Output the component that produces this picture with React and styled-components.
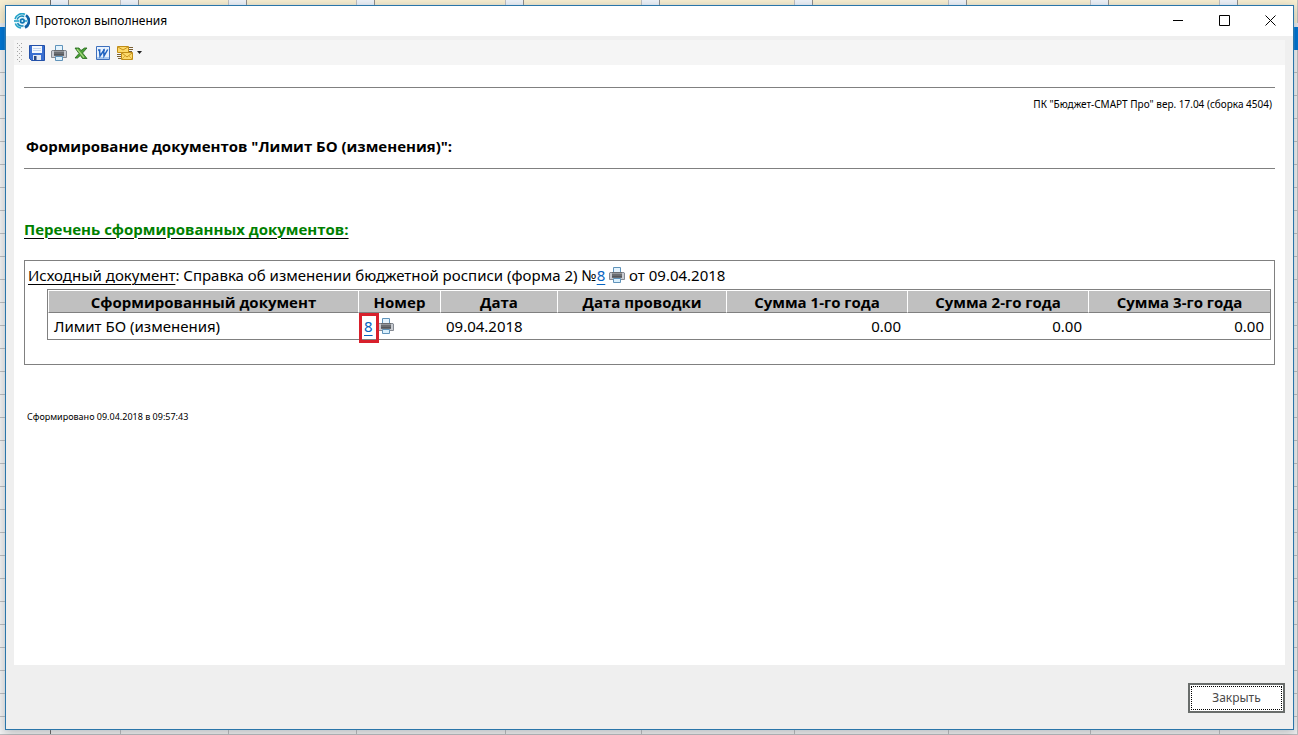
import React from "react";
import styled, { createGlobalStyle } from "styled-components";

const GlobalStyle = createGlobalStyle`
  *, *::before, *::after { box-sizing: border-box; }
  body {
    margin: 0;
    font-family: "Noto Sans", "Open Sans", sans-serif;
    color: #000;
    background: #f0f0f0;
  }
`;

/* ---------- spreadsheet behind the dialog ---------- */

const Desktop = styled.div`
  display: grid;
  grid-template: 1fr / minmax(0, 1fr);
  min-height: 100vh;
  overflow: hidden;
`;

const Sheet = styled.div`
  grid-area: 1 / 1;
  display: flex;
  flex-direction: column;
`;

const SheetRow = styled.div`
  display: grid;
  grid-template-columns: 51px 70px 108px 128px 149px 136px 153px 154px 142px 129px 1fr;
  flex: ${(p) => (p.$fill ? "1 0 0" : "none")};
  height: ${(p) => (p.$fill ? "auto" : "23px")};
  background: ${(p) => (p.$selected ? "#0078d7" : "#f4f5f6")};
  border-bottom: 1px solid ${(p) => (p.$selected ? "#0078d7" : "#bfc1c4")};
`;

const SheetHead = styled(SheetRow)`
  height: 27px;
  background: #f8efd2;
  border-bottom: 4px solid #e8edf2;
`;

const SheetCell = styled.div`
  border-right: 1px solid ${(p) => (p.$strong ? "#6e6e6e" : "#bfc1c4")};
`;

const HeadCell = styled(SheetCell)`
  &:not(:first-child)::before {
    content: "";
    display: block;
    width: 18px;
    height: 100%;
    background: #eef3fa;
    border-right: 1px solid #8f8f8f;
  }
`;

/* ---------- window ---------- */

const Window = styled.main`
  grid-area: 1 / 1;
  z-index: 1;
  display: flex;
  flex-direction: column;
  margin: 5px 4px 5px 5px;
  border: 1px solid #2a75a9;
  background: #efefef;
  box-shadow: 0 0 1px 0 rgba(170, 215, 245, 0.7), 0 3px 10px 1px rgba(0, 0, 0, 0.22);
`;

const TitleBar = styled.header`
  display: flex;
  align-items: center;
  height: 30px;
  padding-left: 8px;
  background: #fff;
`;

const Title = styled.h1`
  flex: 1;
  margin: 0 0 0 5px;
  font-size: 12px;
  line-height: 16px;
  font-weight: 400;
`;

const CaptionButton = styled.button`
  display: flex;
  align-items: center;
  justify-content: center;
  width: 46px;
  height: 28px;
  align-self: flex-start;
  padding: 0;
  border: 0;
  background: transparent;
`;

const Toolbar = styled.div`
  display: flex;
  align-items: center;
  height: 25px;
  margin: 4px 8px 0;
  padding-left: 3px;
  background: #f5f5f5;
`;

const Grip = styled.svg`
  margin-right: 4px;
`;

const ToolButton = styled.button`
  display: flex;
  align-items: center;
  justify-content: center;
  gap: 4px;
  height: 22px;
  padding: 0 3px;
  border: 0;
  background: transparent;
`;

/* ---------- report ---------- */

const Report = styled.section`
  flex: 1;
  margin: 0 8px;
  padding: 22px 10px 0;
  background: #fff;
`;

const Rule = styled.hr`
  height: 1px;
  margin: 0;
  border: 0;
  background: #808080;
`;

const Version = styled.p`
  margin: 9px 3px 0 0;
  font-size: 10px;
  line-height: 14px;
  text-align: right;
`;

const Heading = styled.h2`
  margin: 24px 0 11px 2px;
  font: 700 15px/22px "Open Sans", "Noto Sans", sans-serif;
`;

const ListHeading = styled.h3`
  margin: 49px 0 20px;
  font: 700 15px/22px "Open Sans", "Noto Sans", sans-serif;
  color: #008000;
  text-decoration: underline #000 1px;
  text-underline-offset: 3px;
`;

const SourceBox = styled.div`
  padding: 3px 3px 24px;
  border: 1px solid #808080;
  font-size: 15px;
  line-height: 22px;
`;

const SourceLine = styled.p`
  margin: 0 0 3px;
`;

const Underlined = styled.span`
  text-decoration: underline 1px;
  text-underline-offset: 3px;
`;

const DocLink = styled.a`
  color: #0563c1;
  text-decoration: underline 1px;
  text-underline-offset: 3px;
`;

const Table = styled.table`
  width: calc(100% - 19px);
  margin-left: 19px;
  table-layout: fixed;
  border: 1px solid #808080;
  border-collapse: separate;
  border-spacing: 0;
`;

const HeadTh = styled.th`
  height: 23px;
  padding: 1px 0 0;
  border-top: 1px solid #fff;
  border-left: 1px solid #fff;
  border-bottom: 1px solid #808080;
  background: #c0c0c0;
  font: 700 15px/20px "Open Sans", "Noto Sans", sans-serif;
`;

const Td = styled.td`
  height: 26px;
  padding: 0 6px;
  line-height: 22px;
  text-align: ${(p) => (p.$num ? "right" : "left")};
  white-space: nowrap;
`;

const Marked = styled.span`
  position: relative;
  margin-right: 5px;

  &::after {
    content: "";
    position: absolute;
    inset: -3px -6px -7px -5px;
    border: 3px solid #d8202c;
    pointer-events: none;
  }
`;

const Created = styled.p`
  margin: 45px 0 0 3px;
  font-size: 9px;
  line-height: 14px;
`;

const Footer = styled.footer`
  display: flex;
  justify-content: flex-end;
  padding: 18px 8px 16px;
`;

const CloseButton = styled.button`
  width: 97px;
  height: 30px;
  padding: 1px;
  border: 2px solid #696d6b;
  background: #fff;
  color: #4a4a4a;
  font: 400 12px/22px "Noto Sans", sans-serif;
`;

const FocusFrame = styled.span`
  display: block;
  border: 1px dotted #000;
`;

/* ---------- icons ---------- */

const PrinterSvg = styled.svg`
  vertical-align: -2px;
`;

const PrinterIcon = () => (
  <PrinterSvg width="16" height="16" viewBox="0 0 16 16" aria-hidden="true">
    <path d="M1 5.500h14l.5.5v6.500H.5V6z" fill="#c9ccd2" stroke="#858a92" />
    <path d="M4.500.5h7v5h-7z" fill="#e4f3fd" stroke="#5f93ba" />
    <path d="M3 5h10v6H3z" fill="#6a6d71" />
    <path d="M3 6.500h10" stroke="#94979b" />
    <path d="M3 9.500h10" stroke="#54575b" />
    <path d="M4.500 11.500h7v4h-7z" fill="#d9effc" stroke="#5f93ba" />
  </PrinterSvg>
);

const AppIcon = () => (
  <svg width="16" height="16" viewBox="0 0 16 16" aria-hidden="true">
    <circle cx="8" cy="8" r="7.500" fill="#e5f5fb" />
    <path d="M1 6A7.300 7.300 0 0 1 11 1.300M1.300 10.500A7.300 7.300 0 0 0 7 15" fill="none" stroke="#23a3c8" strokeWidth="1.600" />
    <path d="M12 2.200a7.200 7.200 0 0 1-1 12.300" fill="none" stroke="#0d5fa5" strokeWidth="2.600" />
    <path d="M3.200 6.500a5 5 0 0 1 7-3M3.500 10.200a5 5 0 0 0 6 2.500" fill="none" stroke="#1689b9" strokeWidth="1.500" />
    <circle cx="8.300" cy="8" r="2.700" fill="#0e75b4" />
    <circle cx="8.300" cy="8" r="1" fill="#d5f1fa" />
    <path d="M0 8h5M11 8h2" stroke="#1da0c8" strokeWidth="1.400" />
  </svg>
);

const SaveIcon = () => (
  <svg width="16" height="16" viewBox="0 0 16 16" aria-hidden="true">
    <path d="M.5.5h15v15h-13l-2-2z" fill="#3a6fd0" stroke="#2350a8" />
    <path d="M3 1h10v7H3z" fill="#f4f8fd" />
    <path d="M4 3.500h8M4 5.500h8" stroke="#c3d5ee" />
    <path d="M4 10h8v5H4z" fill="#e3e9f2" />
    <path d="M5 11h2.500v4H5z" fill="#27457f" />
  </svg>
);

const ExcelIcon = () => (
  <svg width="16" height="16" viewBox="0 0 16 16" aria-hidden="true">
    <path d="M2 3h4l2 2.500L11.500 3H14L9.500 8l4.500 5.500H9.500L7.300 10.500 4.500 13H2l4-4.500z" fill="#4aa135" stroke="#23661d" strokeWidth=".8" />
    <path d="M4 4l7 8.500" stroke="#a5d67e" strokeWidth="1.200" />
  </svg>
);

const WordIcon = () => (
  <svg width="16" height="16" viewBox="0 0 16 16" aria-hidden="true">
    <path d="M1.500 1.500h13v13h-13z" fill="#e9f2fd" stroke="#3e70bd" />
    <path d="M2 12h12v2H2z" fill="#a9c8ee" />
    <path d="M3 5h2.500M8 5h2M4.500 5l.5 6 3.700-5.500.3 5.500 3.700-6.500" fill="none" stroke="#1e62c0" strokeWidth="1.500" />
  </svg>
);

const MailIcon = () => (
  <svg width="16" height="16" viewBox="0 0 16 16" aria-hidden="true">
    <path d="M12 2.500h4M12 4.500h4M12 6.500h3M0 9.500h4M0 11.500h4M1 13.500h3" stroke="#7a6034" />
    <path d="M.5 1.500h11v6H.5z" fill="#fdd96a" stroke="#c08d18" />
    <path d="M1 2l5 3 5-3" fill="none" stroke="#c6921e" />
    <path d="M4.500 7.500h11v7h-11z" fill="#fdd96a" stroke="#c08d18" />
    <path d="M5 8l5 4 5-4" fill="none" stroke="#c6921e" />
    <path d="M5 14l3-3M15 14l-3-3" fill="none" stroke="#e0ae3c" />
  </svg>
);

const Caret = () => (
  <svg width="5" height="3" viewBox="0 0 5 3" aria-hidden="true">
    <path d="M0 0h5L2.500 3z" fill="#222" />
  </svg>
);

const CaptionGlyph = ({ d }) => (
  <svg width="11" height="11" viewBox="0 0 11 11" aria-hidden="true">
    <path d={d} fill="none" stroke="#000" />
  </svg>
);

const GripDots = () => (
  <Grip width="5" height="19" viewBox="0 0 5 19" aria-hidden="true">
    {[0, 2, 4, 6, 8, 10, 12, 14, 16, 18].map((y) => (
      <path key={y} d={y % 4 ? `M2 ${y + 0.5}h1` : `M0 ${y + 0.5}h1M4 ${y + 0.5}h1`} stroke="#a5a5a5" />
    ))}
  </Grip>
);

/* ---------- data ---------- */

const COLUMNS = [
  { title: "Сформированный документ", width: 310 },
  { title: "Номер", width: 82 },
  { title: "Дата", width: 117 },
  { title: "Дата проводки", width: 169 },
  { title: "Сумма 1-го года", width: 181 },
  { title: "Сумма 2-го года", width: 181 },
  { title: "Сумма 3-го года", width: 182 },
];

const Col = styled.col`
  width: ${(p) => p.$width}px;
`;

const TOOLS = [
  { label: "Сохранить", Icon: SaveIcon },
  { label: "Печать", Icon: PrinterIcon },
  { label: "Excel", Icon: ExcelIcon },
  { label: "Word", Icon: WordIcon },
];

const CELLS = Array.from({ length: 11 }, (_, i) => i);
const ROWS = Array.from({ length: 29 }, (_, i) => i);

const Background = () => (
  <Sheet aria-hidden="true">
    <SheetHead>
      {CELLS.map((c) => <HeadCell key={c} $strong={c === 0} />)}
    </SheetHead>
    <SheetRow $selected />
    {ROWS.map((r) => (
      <SheetRow key={r}>
        {CELLS.map((c) => <SheetCell key={c} $strong={c === 0} />)}
      </SheetRow>
    ))}
    <SheetRow $fill>
      {CELLS.map((c) => <SheetCell key={c} $strong={c === 0} />)}
    </SheetRow>
  </Sheet>
);

export default function App() {
  return (
    <Desktop>
      <GlobalStyle />
      <Background />
      <Window>
        <TitleBar>
          <AppIcon />
          <Title>Протокол выполнения</Title>
          <CaptionButton aria-label="Свернуть"><CaptionGlyph d="M0 5.500h10" /></CaptionButton>
          <CaptionButton aria-label="Развернуть"><CaptionGlyph d="M.5.5h10v10h-10z" /></CaptionButton>
          <CaptionButton aria-label="Закрыть окно"><CaptionGlyph d="M.5.5l10 10M10.500.5l-10 10" /></CaptionButton>
        </TitleBar>

        <Toolbar role="toolbar" aria-label="Экспорт">
          <GripDots />
          {TOOLS.map(({ label, Icon }) => (
            <ToolButton key={label} aria-label={label}><Icon /></ToolButton>
          ))}
          <ToolButton aria-label="Отправить"><MailIcon /><Caret /></ToolButton>
        </Toolbar>

        <Report>
          <Rule />
          <Version>ПК "Бюджет-СМАРТ Про" вер. 17.04 (сборка 4504)</Version>
          <Heading>Формирование документов "Лимит БО (изменения)":</Heading>
          <Rule />
          <ListHeading>Перечень сформированных документов:</ListHeading>
          <SourceBox>
            <SourceLine>
              <Underlined>Исходный документ</Underlined>: Справка об изменении бюджетной росписи (форма 2) №
              <DocLink href="#source">8</DocLink> <PrinterIcon /> от 09.04.2018
            </SourceLine>
            <Table>
              <colgroup>
                {COLUMNS.map((c) => <Col key={c.title} $width={c.width} />)}
              </colgroup>
              <thead>
                <tr>{COLUMNS.map((c) => <HeadTh key={c.title} scope="col">{c.title}</HeadTh>)}</tr>
              </thead>
              <tbody>
                <tr>
                  <Td>Лимит БО (изменения)</Td>
                  <Td><Marked><DocLink href="#result">8</DocLink></Marked><PrinterIcon /></Td>
                  <Td>09.04.2018</Td>
                  <Td />
                  <Td $num>0.00</Td>
                  <Td $num>0.00</Td>
                  <Td $num>0.00</Td>
                </tr>
              </tbody>
            </Table>
          </SourceBox>
          <Created>Сформировано 09.04.2018 в 09:57:43</Created>
        </Report>

        <Footer>
          <CloseButton><FocusFrame>Закрыть</FocusFrame></CloseButton>
        </Footer>
      </Window>
    </Desktop>
  );
}
